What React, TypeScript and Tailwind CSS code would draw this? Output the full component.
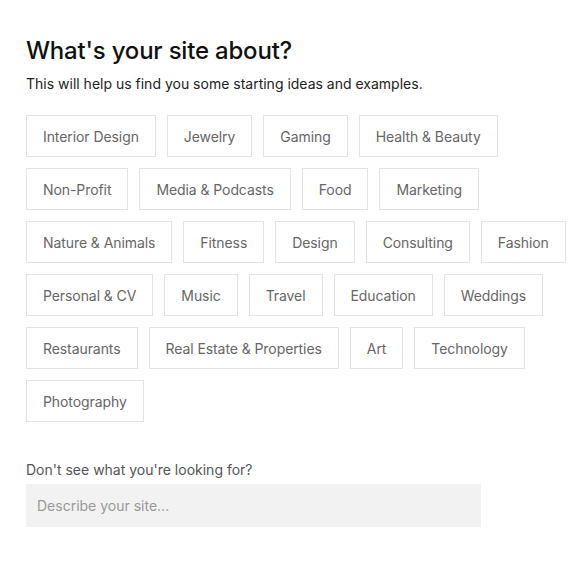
import { useState } from "react"

const topics = [
  "Interior Design",
  "Jewelry",
  "Gaming",
  "Health & Beauty",
  "Non-Profit",
  "Media & Podcasts",
  "Food",
  "Marketing",
  "Nature & Animals",
  "Fitness",
  "Design",
  "Consulting",
  "Fashion",
  "Personal & CV",
  "Music",
  "Travel",
  "Education",
  "Weddings",
  "Restaurants",
  "Real Estate & Properties",
  "Art",
  "Technology",
  "Photography",
]

export default function App() {
  const [selected, setSelected] = useState<string[]>([])

  function toggle(t: string) {
    setSelected((s) => (s.includes(t) ? s.filter((x) => x !== t) : [...s, t]))
  }

  return (
    <div className="min-h-screen bg-white pl-[26px] pr-1 pt-[36px] font-['Inter',sans-serif]">
      <h1 className="text-[24px] leading-[30px] font-medium text-[#111] tracking-[-0.2px]">What's your site about?</h1>
      <p className="mt-[9px] text-[14px] leading-[18px] text-[#222]">
        This will help us find you some starting ideas and examples.
      </p>
      <div className="mt-[22px] flex flex-wrap gap-[11px]">
        {topics.map((t) => (
          <button
            key={t}
            onClick={() => toggle(t)}
            className={
              "h-[42px] px-4 border text-[14px] tracking-[-0.08px] text-[#666] " +
              (selected.includes(t) ? "border-[#116dff] bg-[#eef4ff]" : "border-[#e3e3e3] bg-white")
            }
          >
            {t}
          </button>
        ))}
      </div>
      <p className="mt-[39px] text-[14px] leading-[18px] text-[#555]">Don't see what you're looking for?</p>
      <input
        placeholder="Describe your site..."
        className="mt-[5px] w-[455px] h-[43px] bg-[#f2f2f2] px-[11px] text-[14px] text-[#333] placeholder:text-[#999] outline-none"
      />
    </div>
  )
}
